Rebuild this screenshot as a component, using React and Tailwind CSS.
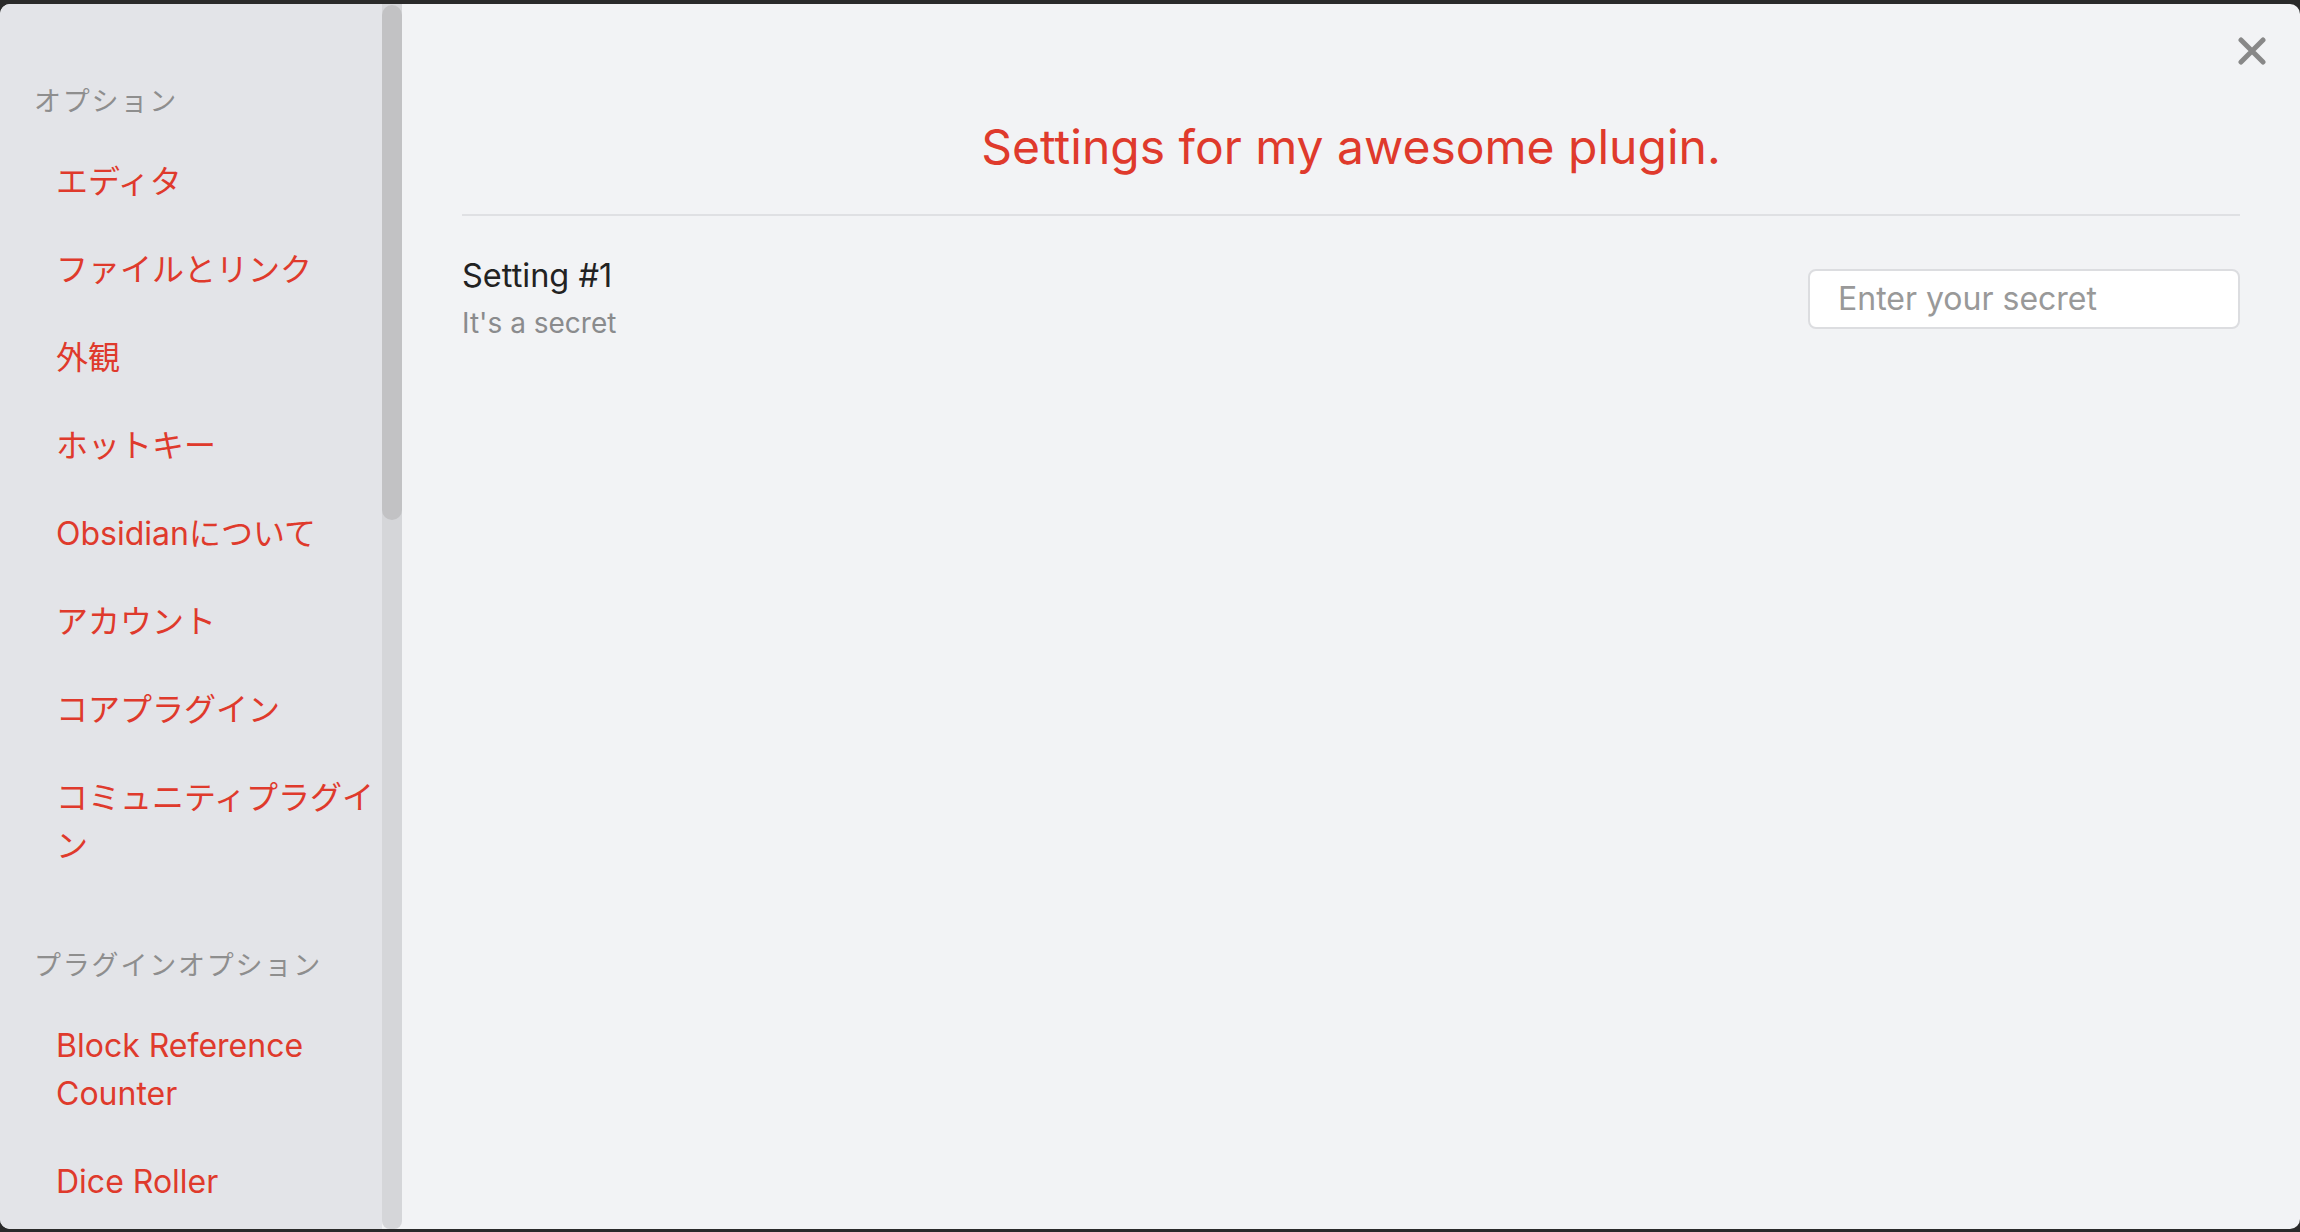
const FONT = { fontFamily: 'Inter, "Noto Sans CJK JP", sans-serif' };

const groups = [
  {
    title: "オプション",
    items: [
      "エディタ",
      "ファイルとリンク",
      "外観",
      "ホットキー",
      "Obsidianについて",
      "アカウント",
      "コアプラグイン",
      "コミュニティプラグイン",
    ],
  },
  {
    title: "プラグインオプション",
    items: ["Block Reference Counter", "Dice Roller"],
  },
];

const CloseIcon = () => (
  <svg width="28" height="28" viewBox="0 0 28 28" fill="none">
    <path
      d="M3 3L25 25M25 3L3 25"
      stroke="#888888"
      strokeWidth="5"
      strokeLinecap="round"
    />
  </svg>
);

export default function App() {
  return (
    <div className="h-screen bg-[#2a2a2a] pt-[4px] pb-[3px]" style={FONT}>
      <div className="flex h-full overflow-hidden rounded-[10px] bg-[#f2f3f5]">
        {/* Sidebar */}
        <div className="w-[382px] shrink-0 overflow-hidden bg-[#e3e4e8] pt-[80px]">
          {groups.map((g, gi) => (
            <div key={g.title} className={gi > 0 ? "mt-[58px]" : ""}>
              <div className="pl-[34px] text-[27px] leading-[36px] tracking-[1.8px] text-[#8e8e8e]">
                {g.title}
              </div>
              <div className="mt-[18px]">
                {g.items.map((item) => (
                  <div
                    key={item}
                    className="py-[20px] pl-[56px] text-[32px] leading-[48px] text-[#df3a2c]"
                  >
                    {item}
                  </div>
                ))}
              </div>
            </div>
          ))}
        </div>

        {/* Scrollbar */}
        <div className="w-[20px] shrink-0 rounded-b-[8px] bg-[#d5d6d9] pt-[1px]">
          <div className="h-[515px] rounded-full bg-[#c2c2c4]" />
        </div>

        {/* Content */}
        <div className="relative flex-1 px-[60px] pt-[113px]">
          <button className="absolute right-[34px] top-[33px]">
            <CloseIcon />
          </button>

          <h2 className="text-center text-[48px] leading-[60px] text-[#df3a2c]">
            Settings for my awesome plugin.
          </h2>
          <div className="mt-[37px] h-[2px] bg-[#dfe0e3]" />

          <div className="flex items-center justify-between pt-[40px]">
            <div>
              <div className="text-[32.5px] leading-[40px] text-[#222222]">
                Setting #1
              </div>
              <div className="mt-[9px] text-[28px] leading-[36px] text-[#8a8b8d]">
                It's a secret
              </div>
            </div>
            <input
              type="text"
              placeholder="Enter your secret"
              className="h-[60px] w-[432px] rounded-[8px] border-2 border-[#dcdde0] bg-white px-[28px] text-[32px] text-[#222222] outline-none placeholder:text-[#999999]"
              style={FONT}
            />
          </div>
        </div>
      </div>
    </div>
  );
}
